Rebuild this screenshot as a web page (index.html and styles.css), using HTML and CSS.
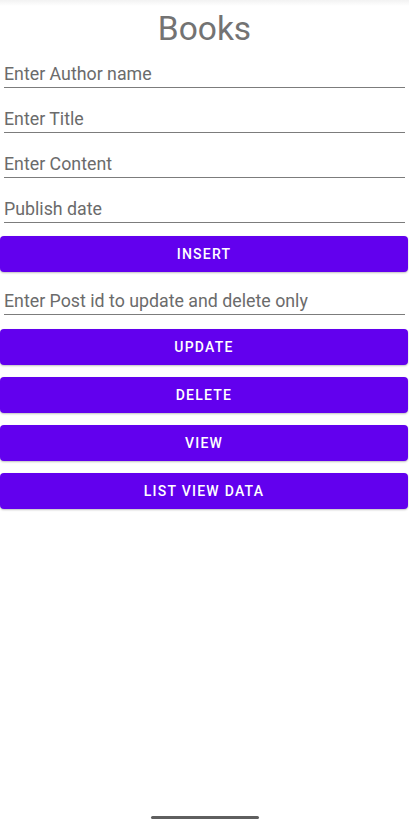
FILE: index.html
```html
<!DOCTYPE html>
<html>
<head>
<meta charset="utf-8">
<link rel="stylesheet" href="styles.css">
</head>
<body>
<div class="screen">
  <div class="topshade"></div>
  <main class="form">
    <h1 class="title">Books</h1>
    <div class="field">Enter Author name</div>
    <div class="field">Enter Title</div>
    <div class="field">Enter Content</div>
    <div class="field">Publish date</div>
    <button class="btn btn--first">INSERT</button>
    <div class="field field--post">Enter Post id to update and delete only</div>
    <button class="btn btn--after-field">UPDATE</button>
    <button class="btn">DELETE</button>
    <button class="btn">VIEW</button>
    <button class="btn">LIST VIEW DATA</button>
  </main>
  <div class="navbar"><span class="handle"></span></div>
</div>
</body>
</html>
```
FILE: styles.css
```css
* { box-sizing: border-box; }
html, body { margin: 0; padding: 0; background: #ffffff; }
body { font-family: Roboto, "Noto Sans", sans-serif; }
.screen {
  position: relative;
  width: 409px;
  height: 830px;
  display: flex;
  flex-direction: column;
  background: #ffffff;
}
.topshade {
  position: absolute;
  left: 0; top: 0; right: 0;
  height: 6px;
  background: linear-gradient(#f2f2f2, rgba(255,255,255,0));
}
.form {
  flex: 1;
  display: flex;
  flex-direction: column;
}
.title {
  margin: 0;
  height: 43px;
  padding-top: 15px;
  font-size: 33.5px;
  line-height: 28px;
  font-weight: 400;
  color: #737373;
  text-align: center;
}
.field {
  margin: 0 4px;
  height: 45px;
  padding-top: 21px;
  padding-bottom: 3px;
  font-size: 17.8px;
  line-height: 20px;
  color: #6b6b6b;
  border-bottom: 1px solid #7c7c7c;
  white-space: nowrap;
}
.field--post { height: 43px; padding-top: 19px; }
.btn {
  display: block;
  width: 408px;
  height: 36px;
  margin: 12px 0 0 0;
  padding: 0;
  border: none;
  border-radius: 4px;
  background: #6200ee;
  color: #ffffff;
  font-family: Roboto, "Noto Sans", sans-serif;
  font-weight: 500;
  font-size: 14px;
  letter-spacing: 1.25px;
  box-shadow: 0 1px 2px rgba(0,0,0,0.25);
}
.btn--first { margin-top: 13px; }
.btn--after-field { margin-top: 14px; }
.navbar {
  height: 30px;
  display: flex;
  justify-content: center;
  align-items: flex-start;
  padding-top: 16px;
}
.handle {
  width: 108px;
  height: 3px;
  border-radius: 2px;
  background: #5f5f5f;
}
```
